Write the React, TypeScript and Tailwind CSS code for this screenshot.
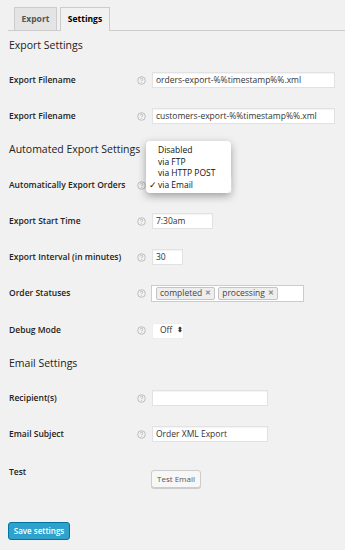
import React from 'react';

const font = { fontFamily: '"Open Sans", "Noto Sans", sans-serif' };

function HelpIcon() {
  return (
    <svg width="9" height="9" viewBox="0 0 20 20" className="shrink-0">
      <circle cx="10" cy="10" r="8.5" fill="none" stroke="#aaa" strokeWidth="1.6" />
      <path d="M7.4 7.6c0-1.6 1.2-2.6 2.7-2.6s2.6 1 2.6 2.3c0 1.9-2.6 2-2.6 3.9" fill="none" stroke="#aaa" strokeWidth="1.6" />
      <circle cx="10.1" cy="14" r="1" fill="#aaa" />
    </svg>
  );
}

function Row({ label, h, children }: { label: string; h: string; children?: React.ReactNode }) {
  return (
    <div className={`flex items-center ${h}`}>
      <div className="w-[128px] text-[8.5px] font-semibold text-[#222]">{label}</div>
      <div className="w-[15px]">
        <HelpIcon />
      </div>
      {children}
    </div>
  );
}

function TextInput({ value, w }: { value?: string; w: string }) {
  return (
    <div
      className={`${w} h-[16px] bg-white border border-[#e2e2e2] shadow-[inset_0_1px_1px_rgba(0,0,0,0.05)] flex items-center px-[3px] text-[8.5px] text-[#333]`}
    >
      {value}
    </div>
  );
}

function Tag({ text }: { text: string }) {
  return (
    <div className="h-[13px] px-[3px] flex items-center gap-[3px] border border-[#c4c4c4] rounded-[2px] bg-[#eeeeee] text-[8.5px] text-[#444]">
      <span>{text}</span>
      <span className="text-[7px] font-bold text-[#888]">✕</span>
    </div>
  );
}

export default function App() {
  return (
    <div className="w-[345px] h-[550px] bg-[#f1f1f1] relative text-[#222]" style={font}>
      {/* tabs */}
      <div className="pt-[7px] pl-[8px]">
        <div className="flex items-end gap-[3px] pl-[6px] border-b border-[#ccc] h-[24px]">
          <div className="h-[23px] w-[43px] flex items-center justify-center bg-[#e4e4e4] border border-b-0 border-[#ccc] text-[8.5px] font-bold text-[#555]">
            Export
          </div>
          <div className="h-[24px] w-[50px] -mb-px flex items-center justify-center bg-[#f1f1f1] border border-b-0 border-[#ccc] text-[8.5px] font-bold text-[#000]">
            Settings
          </div>
        </div>
      </div>

      <div className="pl-[9px]">
        <div className="h-[30px] flex items-center text-[10.5px]">Export Settings</div>
        <div className="h-[1px]" />
        <Row label="Export Filename" h="h-[36px]">
          <TextInput w="w-[183px]" value="orders-export-%%timestamp%%.xml" />
        </Row>
        <Row label="Export Filename" h="h-[36px]">
          <TextInput w="w-[183px]" value="customers-export-%%timestamp%%.xml" />
        </Row>

        <div className="h-[32px] flex items-center text-[10.5px]">Automated Export Settings</div>
        <div className="h-[1px]" />
        <Row label="Automatically Export Orders" h="h-[36px]">
          <div className="w-[80px] h-[16px] bg-white flex items-center justify-end pr-[4px] text-[7px] text-[#ddd]">⬍</div>
        </Row>
        <Row label="Export Start Time" h="h-[36px]">
          <TextInput w="w-[61px]" value="7:30am" />
        </Row>
        <Row label="Export Interval (in minutes)" h="h-[36px]">
          <TextInput w="w-[31px]" value="30" />
        </Row>
        <Row label="Order Statuses" h="h-[36px]">
          <div className="w-[153px] h-[17px] -ml-px bg-white border border-[#ccc] flex items-center gap-[3px] px-[4px]">
            <Tag text="completed" />
            <Tag text="processing" />
          </div>
        </Row>
        <Row label="Debug Mode" h="h-[39px]">
          <div className="w-[32px] h-[16px] bg-white border border-[#eee] rounded-[2px] flex items-center gap-[5px] pl-[7px] text-[8.5px] text-[#333]">
            Off<span className="text-[7px] font-bold">⬍</span>
          </div>
        </Row>

        <div className="h-[28px] flex items-center text-[10.5px]">Email Settings</div>
        <div className="h-[2px]" />
        <Row label="Recipient(s)" h="h-[36px]">
          <TextInput w="w-[116px]" />
        </Row>
        <Row label="Email Subject" h="h-[36px]">
          <TextInput w="w-[116px]" value="Order XML Export" />
        </Row>

        <div className="flex pt-[14px]">
          <div className="w-[142px] text-[8.5px] font-semibold">Test</div>
          <div className="mt-[4px] h-[18px] w-[50px] flex items-center justify-center bg-[#f7f7f7] border border-[#ccc] rounded-[3px] shadow-[0_1px_0_#ccc] text-[8px] text-[#555]">
            Test Email
          </div>
        </div>

        <div className="mt-[34px] -ml-px h-[18px] w-[62px] flex items-center justify-center bg-[#2ea2cc] border border-[#0074a2] rounded-[3px] text-[8px] font-semibold text-white">
          Save settings
        </div>
      </div>

      {/* open select menu */}
      <div className="absolute left-[146px] top-[141px] w-[85px] h-[52px] bg-white rounded-[4px] shadow-[0_3px_8px_rgba(0,0,0,0.35)] py-[3px] text-[8.5px] text-[#111] leading-[11.5px]">
        <div className="pl-[12px]">Disabled</div>
        <div className="pl-[12px]">via FTP</div>
        <div className="pl-[12px]">via HTTP POST</div>
        <div className="relative pl-[12px]">
          <span className="absolute left-[3px]">✓</span>via Email
        </div>
      </div>
    </div>
  );
}
